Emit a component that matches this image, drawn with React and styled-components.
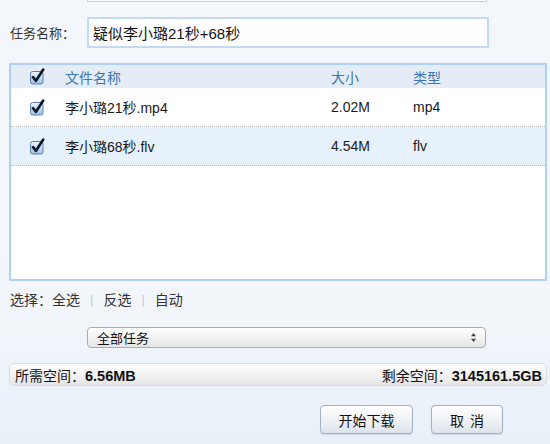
import React from "react";
import styled, { createGlobalStyle } from "styled-components";

const Global = createGlobalStyle`
  html, body { margin: 0; padding: 0; }
  body {
    background: #f2f6fb;
    font-family: "Liberation Sans", "Noto Sans CJK SC", Arial, sans-serif;
    color: #222;
  }
`;

const Page = styled.div`
  width: 550px;
  height: 444px;
  overflow: hidden;
  background: linear-gradient(#f3f7fb 0%, #f2f6fb 70%, #e9f0f8 100%);
  display: flex;
  flex-direction: column;
`;

const PrevField = styled.div`
  margin-left: 87px;
  width: 398px;
  height: 1px;
  border: 1px solid #b9d2ef;
  border-top: none;
  background: #fff;
`;

const NameRow = styled.div`
  display: flex;
  align-items: center;
  margin-top: 15px;
  padding-left: 10px;
`;

const Label = styled.span`
  width: 77px;
  font-size: 13px;
  color: #333;
`;

const NameInput = styled.div`
  width: 394px;
  height: 27px;
  border: 2px solid #c4daf3;
  background: #fff;
  display: flex;
  align-items: center;
  padding-left: 4px;
  font-size: 15px;
  color: #111;
`;

const Table = styled.div`
  margin: 15px 0 0 9px;
  width: 534px;
  height: 214px;
  border: 2px solid #b0d1f3;
  background: #fff;
  display: flex;
  flex-direction: column;
`;

const Grid = styled.div`
  display: grid;
  grid-template-columns: 54px 266px 82px 1fr;
  align-items: center;
  height: ${(p) => p.$h}px;
  background: ${(p) => p.$bg || "transparent"};
  border-bottom: ${(p) => (p.$dotted ? "1px dotted #b9bcc0" : "none")};
  box-sizing: border-box;
  font-size: 14px;
  color: ${(p) => p.$color || "#1a1a1a"};
`;

const CheckCell = styled.div`
  padding-left: 18px;
  display: flex;
  align-items: center;
`;

const Cell = styled.div`
  white-space: nowrap;
`;

const SelectLine = styled.div`
  display: flex;
  align-items: center;
  gap: 10px;
  margin: 9px 0 0 10px;
  font-size: 14px;
  color: #333;
  height: 18px;
`;

const Sep = styled.span`
  color: #c8ccd2;
  font-size: 13px;
`;

const Dropdown = styled.div`
  margin: 19px 0 0 87px;
  width: 399px;
  height: 21px;
  border: 1px solid #a9adb3;
  border-radius: 4px;
  background: linear-gradient(#ffffff, #f3f3f3 50%, #e6e6e6);
  display: flex;
  align-items: center;
  justify-content: space-between;
  padding: 0 8px 0 9px;
  box-sizing: border-box;
  font-size: 13px;
  color: #111;
`;

const SpaceBar = styled.div`
  margin: 15px 0 0 9px;
  width: 538px;
  height: 23px;
  border: 1px solid #dadcdf;
  border-radius: 5px;
  background: linear-gradient(#fdfdfd, #f1f1f1 55%, #e5e5e5);
  display: flex;
  align-items: center;
  justify-content: space-between;
  padding: 0 4px 0 5px;
  box-sizing: border-box;
  font-size: 14px;
  color: #111;
`;

const Value = styled.span`
  font-weight: 600;
  font-size: 14.5px;
`;

const Buttons = styled.div`
  display: flex;
  justify-content: flex-end;
  gap: 18px;
  margin: 19px 47px 0 0;
`;

const Button = styled.button`
  width: ${(p) => p.$w}px;
  height: 29px;
  border: 1px solid #a3b2c4;
  border-radius: 4px;
  background: linear-gradient(#ffffff, #eef1f5 55%, #dde3ea);
  font-family: "Noto Sans CJK SC", sans-serif;
  font-size: 14px;
  color: #111;
  padding: 0;
  word-spacing: 3px;
  white-space: pre;
  box-shadow: 0 1px 1px rgba(120, 140, 170, 0.25);
`;

function Check() {
  return (
    <svg width="17" height="17" viewBox="0 0 17 17">
      <defs>
        <linearGradient id="cbg" x1="0" y1="0" x2="0" y2="1">
          <stop offset="0" stopColor="#eef6ff" />
          <stop offset="1" stopColor="#9cc0ea" />
        </linearGradient>
      </defs>
      <rect x="1.5" y="3.5" width="12.5" height="12.5" rx="2.2" fill="url(#cbg)" stroke="#5d7ea8" strokeWidth="1" />
      <path d="M4 9.2 L7 12.8 L14.2 1.5" fill="none" stroke="#0c1426" strokeWidth="2.6" strokeLinecap="round" strokeLinejoin="round" />
    </svg>
  );
}

function Arrows() {
  return (
    <svg width="7" height="11" viewBox="0 0 7 11">
      <path d="M3.5 1 L6 4.3 L1 4.3 Z" fill="#444" />
      <path d="M3.5 10 L6 6.7 L1 6.7 Z" fill="#444" />
    </svg>
  );
}

const files = [
  { name: "李小璐21秒.mp4", size: "2.02M", type: "mp4" },
  { name: "李小璐68秒.flv", size: "4.54M", type: "flv", active: true },
];

export default function App() {
  return (
    <Page>
      <Global />
      <PrevField />
      <NameRow>
        <Label>任务名称：</Label>
        <NameInput>疑似李小璐21秒+68秒</NameInput>
      </NameRow>
      <Table>
        <Grid $h={23} $bg="#e4edf6" $color="#3f74b3">
          <CheckCell><Check /></CheckCell>
          <Cell>文件名称</Cell>
          <Cell>大小</Cell>
          <Cell>类型</Cell>
        </Grid>
        {files.map((f) => (
          <Grid key={f.name} $h={39} $dotted $bg={f.active ? "#e7f1fc" : "#fff"}>
            <CheckCell><Check /></CheckCell>
            <Cell>{f.name}</Cell>
            <Cell>{f.size}</Cell>
            <Cell>{f.type}</Cell>
          </Grid>
        ))}
      </Table>
      <SelectLine>
        <span>选择：全选</span>
        <Sep>|</Sep>
        <span>反选</span>
        <Sep>|</Sep>
        <span>自动</span>
      </SelectLine>
      <Dropdown>
        <span>全部任务</span>
        <Arrows />
      </Dropdown>
      <SpaceBar>
        <span>所需空间：<Value>6.56MB</Value></span>
        <span>剩余空间：<Value>3145161.5GB</Value></span>
      </SpaceBar>
      <Buttons>
        <Button $w={93}>开始下载</Button>
        <Button $w={72}>{"取 消"}</Button>
      </Buttons>
    </Page>
  );
}
